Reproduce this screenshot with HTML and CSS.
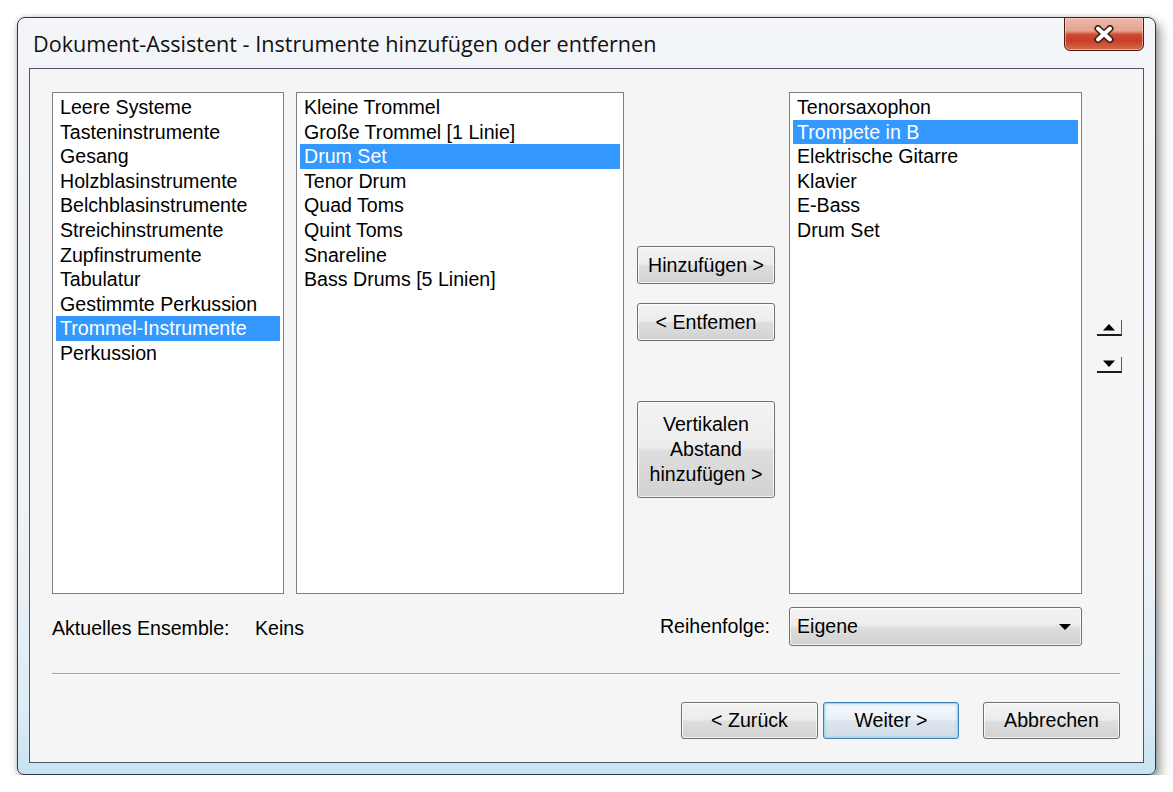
FILE: index.html
```html
<!DOCTYPE html>
<html lang="de">
<head>
<meta charset="utf-8">
<title>Dokument-Assistent</title>
<link rel="stylesheet" href="styles.css">
</head>
<body>
<div class="window">
  <div class="titlebar">
    <span class="title">Dokument-Assistent - Instrumente hinzufügen oder entfernen</span>
    <button class="close" aria-label="Schließen">
      <svg width="22" height="18" viewBox="0 0 22 18">
        <path d="M5 3.5 L17 14.5 M17 3.5 L5 14.5" stroke="#3a1a12" stroke-width="7" stroke-linecap="round"/>
        <path d="M5 3.5 L17 14.5 M17 3.5 L5 14.5" stroke="#ffffff" stroke-width="4" stroke-linecap="round"/>
      </svg>
    </button>
  </div>

  <div class="client">
    <div class="lists-row">
      <ul class="listbox families">
        <li>Leere Systeme</li>
        <li>Tasteninstrumente</li>
        <li>Gesang</li>
        <li>Holzblasinstrumente</li>
        <li>Belchblasinstrumente</li>
        <li>Streichinstrumente</li>
        <li>Zupfinstrumente</li>
        <li>Tabulatur</li>
        <li>Gestimmte Perkussion</li>
        <li class="selected">Trommel-Instrumente</li>
        <li>Perkussion</li>
      </ul>

      <ul class="listbox instruments">
        <li>Kleine Trommel</li>
        <li>Große Trommel [1 Linie]</li>
        <li class="selected">Drum Set</li>
        <li>Tenor Drum</li>
        <li>Quad Toms</li>
        <li>Quint Toms</li>
        <li>Snareline</li>
        <li>Bass Drums [5 Linien]</li>
      </ul>

      <div class="move-buttons">
        <button class="btn move">Hinzufügen &gt;</button>
        <button class="btn move remove">&lt; Entfemen</button>
        <button class="btn spacer-btn">Vertikalen<br>Abstand<br>hinzufügen &gt;</button>
      </div>

      <ul class="listbox score">
        <li>Tenorsaxophon</li>
        <li class="selected">Trompete in B</li>
        <li>Elektrische Gitarre</li>
        <li>Klavier</li>
        <li>E-Bass</li>
        <li>Drum Set</li>
      </ul>

      <div class="order-buttons">
        <button class="arrow" aria-label="Nach oben">
          <svg width="14" height="8" viewBox="0 0 14 8"><path d="M1 7.5 L7 1 L13 7.5 Z" fill="#000"/></svg>
        </button>
        <button class="arrow down" aria-label="Nach unten">
          <svg width="14" height="8" viewBox="0 0 14 8"><path d="M1 0.5 L13 0.5 L7 7 Z" fill="#000"/></svg>
        </button>
      </div>
    </div>

    <div class="options-row">
      <div class="ensemble">
        <span class="ensemble-label">Aktuelles Ensemble:</span>
        <span>Keins</span>
      </div>
      <span class="order-label">Reihenfolge:</span>
      <div class="select">
        <span>Eigene</span>
        <svg width="14" height="8" viewBox="0 0 14 8"><path d="M1 1 L13 1 L7 7 Z" fill="#000"/></svg>
      </div>
    </div>

    <div class="separator"></div>

    <div class="footer">
      <button class="btn nav">&lt; Zurück</button>
      <button class="btn nav default">Weiter &gt;</button>
      <button class="btn nav cancel">Abbrechen</button>
    </div>
  </div>
</div>
</body>
</html>
```

FILE: styles.css
```css
html, body {
  margin: 0;
  background: #ffffff;
}

body {
  font-family: "Liberation Sans", Arial, sans-serif;
  font-size: 19.6px;
  color: #000;
}

/* Window frame */
.window {
  box-sizing: border-box;
  margin: 17px 0 0 17px;
  width: 1139px;
  height: 758px;
  border: 1px solid #2c3943;
  border-radius: 8px 8px 7px 7px;
  padding: 0 11px 11px;
  display: flex;
  flex-direction: column;
  background: linear-gradient(#f3f5f8 0%, #eef2f6 70%, #dcebf5 92%, #c4e3f3 100%);
  box-shadow: 4px 6px 12px rgba(0, 0, 0, 0.42), 0 0 4px rgba(0, 0, 0, 0.18);
}

.titlebar {
  height: 50px;
  display: flex;
  justify-content: space-between;
  align-items: flex-start;
}

.title {
  font-family: "Open Sans", "Noto Sans", sans-serif;
  font-size: 21.6px;
  line-height: 28px;
  margin: 12px 0 0 4px;
  color: #111;
  white-space: nowrap;
}

.close {
  box-sizing: border-box;
  margin: -1px 0 0 0;
  width: 80px;
  height: 34px;
  padding: 0;
  border: 1px solid #4a1c13;
  border-radius: 0 0 6px 6px;
  background: linear-gradient(#ebb9ab 0%, #e6a390 40%, #cf4a33 52%, #c63d27 70%, #d9694c 100%);
  box-shadow: inset 0 0 0 1px rgba(255, 220, 210, 0.55);
  display: flex;
  align-items: center;
  justify-content: center;
}

.close svg { display: block; }

/* Client area */
.client {
  flex: 1;
  box-sizing: border-box;
  border: 1px solid #4b5660;
  background: #f5f5f5;
  padding: 23px 23px 22px 22px;
  display: flex;
  flex-direction: column;
}

.lists-row {
  display: flex;
  height: 502px;
}

.lists-row > * { flex-shrink: 0; }

.listbox {
  box-sizing: border-box;
  height: 502px;
  margin: 0;
  padding: 2px 3px;
  list-style: none;
  background: #fff;
  border: 1px solid #7c7f84;
}

.listbox li {
  line-height: 24.6px;
  height: 24.6px;
  padding-left: 4px;
  white-space: nowrap;
}

.listbox li.selected {
  background: #3399ff;
  color: #fff;
}

.families { width: 232px; margin-right: 12px; }
.instruments { width: 328px; }
.score { width: 293px; }

.move-buttons {
  width: 138px;
  margin: 0 14px 0 13px;
  padding-top: 154px;
  display: flex;
  flex-direction: column;
}

.btn {
  box-sizing: border-box;
  font: inherit;
  color: #000;
  padding: 0;
  border: 1px solid #707070;
  border-radius: 3px;
  background: linear-gradient(#f3f3f3 0%, #ececec 48%, #dedede 52%, #d2d2d2 100%);
  box-shadow: inset 0 0 0 1px rgba(255, 255, 255, 0.75);
  text-align: center;
}

.move { height: 38px; }
.remove { margin-top: 19px; }

.spacer-btn {
  height: 97px;
  margin-top: 60px;
  line-height: 25px;
}

.order-buttons {
  margin-left: 15px;
  padding-top: 228px;
  display: flex;
  flex-direction: column;
}

.arrow {
  box-sizing: border-box;
  width: 25px;
  height: 16px;
  padding: 0 0 1px 0;
  border: none;
  border-right: 1px solid #5a5a5a;
  border-bottom: 2px solid #1c1c1c;
  background: #f5f5f5;
  display: flex;
  align-items: center;
  justify-content: center;
}

.arrow svg { display: block; }
.arrow.down { margin-top: 21px; }

/* Options row */
.options-row {
  margin-top: 13px;
  height: 39px;
  display: flex;
  align-items: center;
  margin-right: 38px;
}

.ensemble {
  flex: 1;
  display: flex;
  padding-top: 4px;
}

.ensemble-label {
  width: 203px;
}

.order-label {
  margin-right: 19px;
}

.select {
  box-sizing: border-box;
  width: 293px;
  height: 39px;
  border: 1px solid #707070;
  border-radius: 3px;
  background: linear-gradient(#f3f3f3 0%, #ececec 48%, #dedede 52%, #d2d2d2 100%);
  box-shadow: inset 0 0 0 1px rgba(255, 255, 255, 0.75);
  display: flex;
  align-items: center;
  justify-content: space-between;
  padding: 0 9px 0 7px;
}

.select svg { display: block; margin-top: 1px; }

.separator {
  margin-top: 27px;
  border-top: 1px solid #a0a0a0;
  border-bottom: 1px solid #ffffff;
}

.footer {
  margin-top: 27px;
  display: flex;
  justify-content: flex-end;
}

.nav {
  width: 137px;
  height: 37px;
}

.default {
  width: 136px;
  margin-left: 5px;
  border-color: #3c7fb1;
  background: linear-gradient(#f4f8fb 0%, #eaf1f6 48%, #dce5ec 52%, #d2dde6 100%);
  box-shadow: inset 0 0 0 1px #9fd6f2, inset 0 0 3px 1px rgba(120, 200, 240, 0.6);
}

.cancel { margin-left: 24px; }
```
